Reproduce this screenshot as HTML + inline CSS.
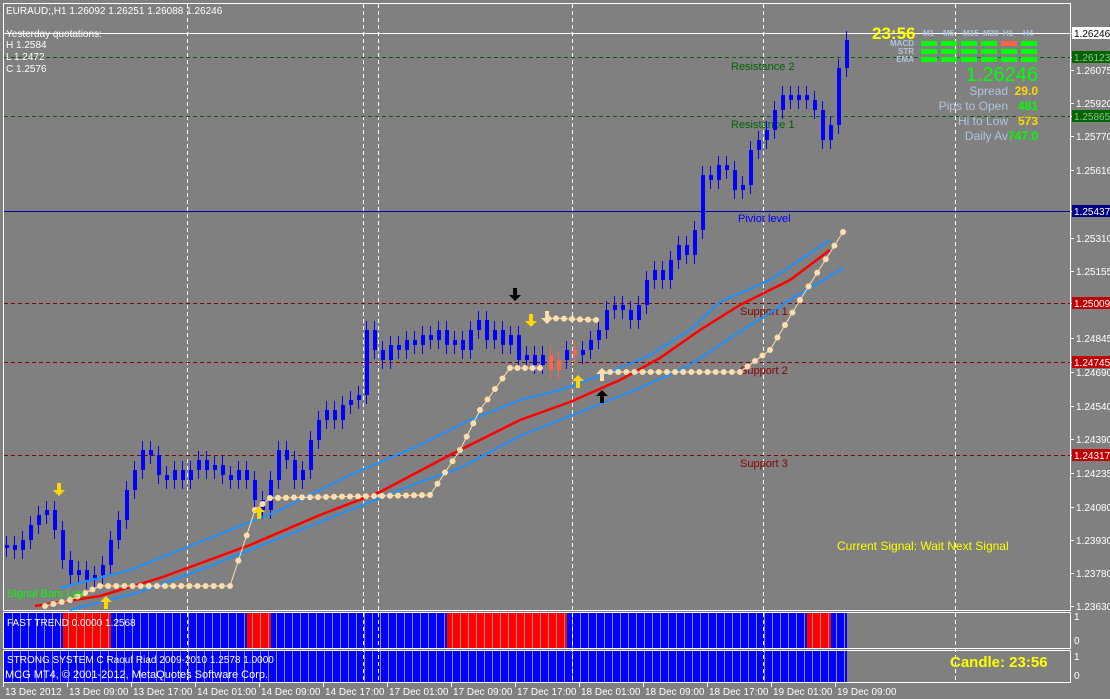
<!DOCTYPE html>
<html><head><meta charset="utf-8"><style>
body{margin:0;background:#808080;width:1110px;height:699px;overflow:hidden;font-family:"Liberation Sans",sans-serif}
svg{position:absolute;left:0;top:0}
</style></head><body>
<svg width="1110" height="699" xmlns="http://www.w3.org/2000/svg" font-family="Liberation Sans, sans-serif">
<rect width="1110" height="699" fill="#808080"/>
<rect x="3.5" y="3.5" width="1067" height="607" fill="none" stroke="#fff"/>
<rect x="3.5" y="612.5" width="1067" height="36" fill="none" stroke="#fff"/>
<rect x="3.5" y="650.5" width="1067" height="32" fill="none" stroke="#fff"/>
<rect x="4" y="613" width="843" height="35" fill="#0000ff"/>
<rect x="63" y="613" width="48" height="35" fill="#ff0000"/>
<rect x="247" y="613" width="24" height="35" fill="#ff0000"/>
<rect x="447" y="613" width="120" height="35" fill="#ff0000"/>
<rect x="807" y="613" width="24" height="35" fill="#ff0000"/>
<rect x="4" y="651" width="843" height="31" fill="#0000ff"/>
<g id="hsep" stroke="#9090a0" stroke-width="1"></g>
<g stroke="#fff" stroke-dasharray="4,3">
<line x1="187.5" y1="4" x2="187.5" y2="682"/><line x1="363.5" y1="4" x2="363.5" y2="682"/><line x1="378.5" y1="4" x2="378.5" y2="682"/><line x1="572.5" y1="4" x2="572.5" y2="682"/><line x1="763.5" y1="4" x2="763.5" y2="682"/><line x1="955.5" y1="4" x2="955.5" y2="682"/>
</g>
<line x1="4" y1="33.5" x2="1070" y2="33.5" stroke="#fff"/>
<g stroke="#006400" stroke-dasharray="4,3"><line x1="4" y1="57.5" x2="1070" y2="57.5"/><line x1="4" y1="116.5" x2="1070" y2="116.5"/></g>
<line x1="4" y1="211.5" x2="1070" y2="211.5" stroke="#0000a0"/>
<g stroke="#8b0000" stroke-dasharray="4,3"><line x1="4" y1="303.5" x2="1070" y2="303.5"/><line x1="4" y1="362.5" x2="1070" y2="362.5"/><line x1="4" y1="455.5" x2="1070" y2="455.5"/></g>
<g font-size="11"><text x="731" y="70" fill="#006400">Resistance 2</text><text x="731" y="128" fill="#006400">Resistance 1</text><text x="738" y="222" fill="#0000ff">Piviot level</text><text x="740" y="315" fill="#8b0000">Support 1</text><text x="740" y="374" fill="#8b0000">Support 2</text><text x="740" y="467" fill="#8b0000">Support 3</text></g>
<g id="candles"></g>
<polyline fill="none" stroke="#1e90ff" stroke-width="2" points="60,588 130,570 200,542 280,510 350,475 420,445 470,420 520,400 560,390 610,372 650,355 690,330 720,302 770,280 830,240"/>
<polyline fill="none" stroke="#1e90ff" stroke-width="2" points="70,610 140,592 200,570 280,538 350,510 420,482 460,468 520,436 560,420 610,400 640,388 690,365 730,338 790,300 843,268"/>
<polyline fill="none" stroke="#ff0000" stroke-width="2.5" points="35,606 100,596 160,578 250,545 320,515 380,492 450,455 520,420 570,402 620,380 660,358 700,330 740,305 790,280 830,250"/>
<g id="dots" fill="#ffdead" stroke="#ffdead"></g>
<g id="arrows"></g>
<text x="7" y="597" font-size="11" fill="#00ff00">Signal Bars Lev</text>
<text x="837" y="550" font-size="12" fill="#ffff00">Current Signal: Wait Next Signal</text>
<g font-size="10" fill="#fff"><text x="6" y="14">EURAUD;,H1  1.26092 1.26251 1.26088 1.26246</text><text x="6" y="37">Yesterday quotations:</text><text x="6" y="48">H 1.2584</text><text x="6" y="60">L 1.2472</text><text x="6" y="72">C 1.2576</text></g>
<text x="872" y="39" font-size="17" font-weight="bold" fill="#ffff00">23:56</text>
<g font-size="8" fill="#b0c4de" font-weight="bold"><text x="923" y="36">M1</text><text x="943" y="36">M5</text><text x="963" y="36">M15</text><text x="983" y="36">M30</text><text x="1003" y="36">H1</text><text x="1023" y="36">H4</text>
<text x="914" y="46" text-anchor="end">MACD</text><text x="914" y="54" text-anchor="end">STR</text><text x="914" y="62" text-anchor="end">EMA</text></g>
<g id="sig"></g>
<text x="1038" y="81" font-size="20" fill="#00ff00" text-anchor="end">1.26246</text>
<g font-size="12" fill="#b0c4de" text-anchor="end"><text x="1008" y="95">Spread</text><text x="1008" y="110">Pips to Open</text><text x="1008" y="125">Hi to Low</text><text x="1008" y="140">Daily Av</text></g>
<g font-size="12" font-weight="bold" text-anchor="end"><text x="1038" y="95" fill="#ffd700">29.0</text><text x="1038" y="110" fill="#00ff00">481</text><text x="1038" y="125" fill="#ffd700">573</text><text x="1038" y="140" fill="#00ff00">747.0</text></g>
<g font-size="10" fill="#fff"><text x="7" y="626">FAST TREND 0.0000 1.2568</text><text x="7" y="663">STRONG SYSTEM C Raouf Riad 2009-2010  1.2578 1.0000</text><text x="5" y="678" font-size="11">MCG MT4, © 2001-2012, MetaQuotes Software Corp.</text></g>
<text x="950" y="667" font-size="15" font-weight="bold" fill="#ffff00">Candle:  23:56</text>
<g id="axis" font-size="10" fill="#fff"></g>
<g font-size="10" fill="#fff"><text x="1074" y="620">1</text><text x="1074" y="644">0</text><text x="1074" y="660">1</text><text x="1074" y="679">0</text></g>
<g id="time" font-size="10" fill="#fff"></g>
</svg>
<script>
var NS="http://www.w3.org/2000/svg";
function el(p,t,a,txt){var e=document.createElementNS(NS,t);for(var k in a)e.setAttribute(k,a[k]);if(txt)e.textContent=txt;document.getElementById(p).appendChild(e);}
for(var x=12;x<847;x+=8){el("hsep","line",{x1:x+.5,y1:613,x2:x+.5,y2:648});el("hsep","line",{x1:x+.5,y1:651,x2:x+.5,y2:682});}
var c=[545,550,540,525,515,510,530,560,575,570,580,575,565,540,520,490,470,450,455,475,480,470,480,470,460,470,465,475,480,470,480,500,510,480,450,460,480,470,440,420,410,420,405,400,395,330,350,360,345,350,340,345,335,340,330,345,340,350,330,320,340,330,345,335,360,355,365,355,370,360,350,355,350,340,330,310,305,310,320,305,280,270,280,260,245,255,230,175,180,165,170,190,185,150,140,130,110,95,100,95,100,110,140,125,68,40];
var p=548;
for(var i=0;i<c.length;i++){var x=6+i*8,o=p,cl=c[i],t=Math.min(o,cl),b=Math.max(o,cl);if(b-t<2)b=t+2;
var col=(i==68||i==69||i==71)?"#ff6347":"#0000ff";
el("candles","line",{x1:x+.5,y1:t-9,x2:x+.5,y2:b+9,stroke:col});
el("candles","rect",{x:x-1,y:t,width:4,height:b-t,fill:col});p=cl;}
function dots(pts){for(var s=0;s<pts.length-1;s++){var a=pts[s],b=pts[s+1];el("dots","line",{x1:a[0],y1:a[1],x2:b[0],y2:b[1],"stroke-width":1});var n=Math.max(1,Math.round(Math.abs(b[0]-a[0])/8));for(var k=0;k<n;k++){el("dots","circle",{cx:a[0]+(b[0]-a[0])*k/n,cy:a[1]+(b[1]-a[1])*k/n,r:2.5});}}el("dots","circle",{cx:pts[pts.length-1][0],cy:pts[pts.length-1][1],r:2.5});}
dots([[45,606],[70,600],[100,586],[230,586],[255,510],[270,498],[430,495],[460,450],[480,410],[510,368],[540,368]]);
dots([[548,318],[596,320]]);
dots([[602,372],[740,372],[770,350],[800,300],[843,232]]);
function arrow(x,y,dir,col){var s=dir; // y = tip
var pts=[[x,y],[x-6,y-6*s],[x-2,y-6*s],[x-2,y-13*s],[x+2,y-13*s],[x+2,y-6*s],[x+6,y-6*s]];
el("arrows","polygon",{points:pts.map(function(q){return q.join(",")}).join(" "),fill:col});}
arrow(59,496,1,"#ffd700");arrow(106,596,-1,"#ffd700");arrow(259,506,-1,"#ffd700");
arrow(515,301,1,"#000");arrow(531,327,1,"#ffd700");arrow(547,324,1,"#ffdead");
arrow(578,375,-1,"#ffd700");arrow(602,368,-1,"#ffdead");arrow(602,390,-1,"#000");
var sc=["#00ff00","#00ff00","#00ff00","#00ff00","#ff6347","#00ff00"];
for(var j=0;j<6;j++)for(var r=0;r<3;r++)el("sig","rect",{x:921+j*20,y:41+r*8,width:16,height:5,fill:(r==0?sc[j]:"#00ff00")});
var ax=[["1.26246",33,"w"],["1.26123",57,"g"],["1.26075",70],["1.25920",103],["1.25865",116,"g"],["1.25770",136],["1.25616",170],["1.25437",211,"b"],["1.25310",238],["1.25155",271],["1.25009",303,"r"],["1.24845",338],["1.24745",362,"r"],["1.24690",372],["1.24540",406],["1.24390",439],["1.24317",455,"r"],["1.24235",473],["1.24080",507],["1.23930",540],["1.23780",573],["1.23630",606]];
ax.forEach(function(a){var y=a[1];el("axis","line",{x1:1071,y1:y+.5,x2:1074,y2:y+.5,stroke:"#fff"});
if(a[2]){var bg={w:"#fff",g:"#006400",b:"#000080",r:"#c00000"}[a[2]];el("axis","rect",{x:1072,y:y-6,width:38,height:12,fill:bg});el("axis","text",{x:1074,y:y+4,fill:a[2]=="w"?"#000":(a[2]=="g"?"#90c090":"#fff")},a[0]);}
else el("axis","text",{x:1076,y:y+4},a[0]);});
var tl=["13 Dec 2012","13 Dec 09:00","13 Dec 17:00","14 Dec 01:00","14 Dec 09:00","14 Dec 17:00","17 Dec 01:00","17 Dec 09:00","17 Dec 17:00","18 Dec 01:00","18 Dec 09:00","18 Dec 17:00","19 Dec 01:00","19 Dec 09:00"];
tl.forEach(function(t,i){var x=3+i*64;el("time","line",{x1:x+.5,y1:683,x2:x+.5,y2:687,stroke:"#fff"});el("time","text",{x:x+2,y:695},t);});
</script>
</body></html>
